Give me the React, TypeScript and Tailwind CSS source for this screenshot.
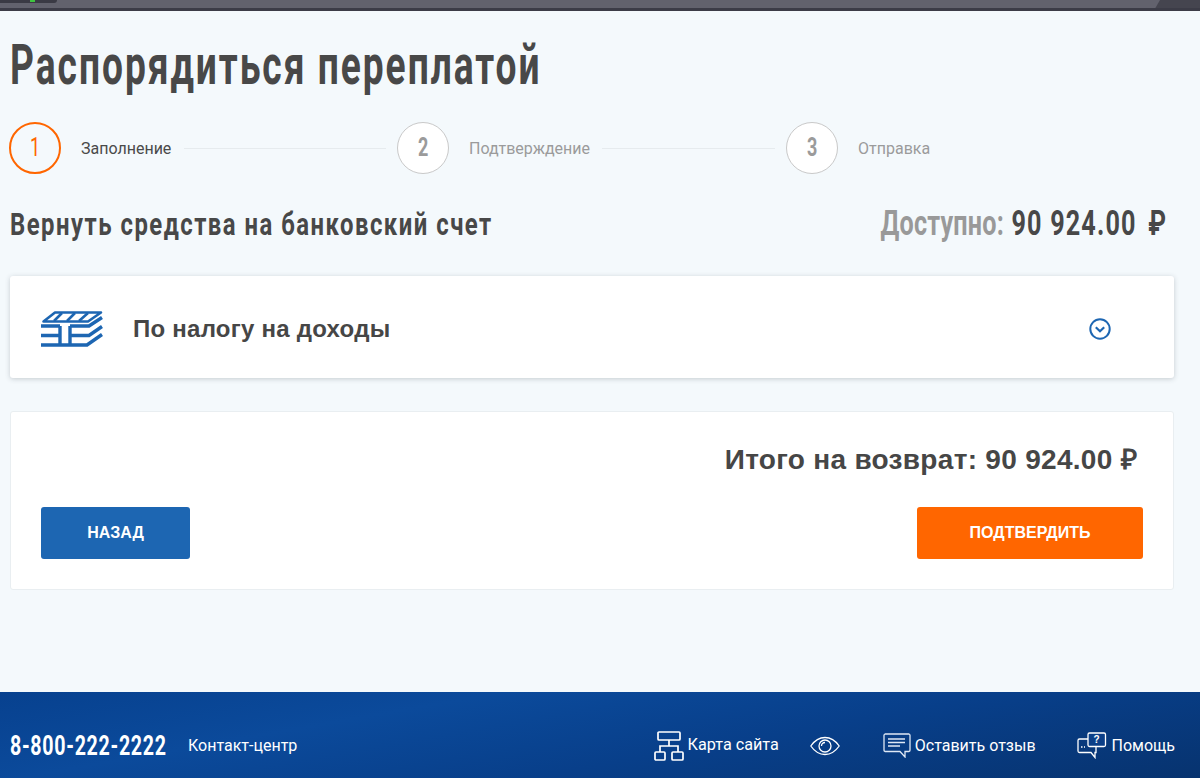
const din = "font-['Roboto',sans-serif] whitespace-nowrap inline-block";
const arial = "font-['Liberation_Sans',Arial,sans-serif]";

function Step({ n, label, active, labelWidth, lineWidth }: { n: number; label: string; active?: boolean; labelWidth: string; lineWidth?: string }) {
  return (
    <>
      <div className={`w-[52px] h-[52px] shrink-0 rounded-full flex items-center justify-center ${active ? "border-2 border-[#ff6600]" : "bg-white border border-[#c9c9c9]"}`}>
        <span className={`${din} text-[25px] scale-x-[0.72] ${active ? "text-[#ff6600] font-normal" : "text-[#9b9b9b] font-bold"}`}>{n}</span>
      </div>
      <span className={`ml-5 pt-[2px] text-[16px] font-['Roboto',sans-serif] whitespace-nowrap ${labelWidth} ${active ? "text-[#4a4a4a]" : "text-[#9b9b9b]"}`}>{label}</span>
      {lineWidth && <div className={`ml-3 mr-[11px] h-px bg-[#e6ebee] ${lineWidth}`} />}
    </>
  );
}

function TopBar() {
  return (
    <div className="h-[11px] shrink-0 bg-[#62626d] border-b-[3px] border-[#3c3c47] flex justify-between">
      <div className="w-[57px] h-[3px] bg-[#3a3a44] rounded-br flex justify-center">
        <div className="w-[5px] h-[2px] bg-[#3fc43f] ml-2" />
      </div>
      <div className="w-[48px] h-[8px] bg-[#45454f] -skew-x-[30deg] origin-top-right translate-x-2" />
    </div>
  );
}

function TaxIcon() {
  return (
    <svg width="62" height="36" viewBox="0 0 62 36" fill="none" stroke="#1d66b2">
      <path d="M14 1.5H60L47 10.5H2.5Z" strokeWidth="2.6" strokeLinejoin="round" />
      <path d="M21 2L13 10M34 2L26 10M47 2L38 10" strokeWidth="2.6" />
      <path d="M0 15H19M0 24.5H19M29 15H48L61 6.5M29 24.5H48L61 15.5M0 34H46L61 23.5M19 15V34M29 15V34" strokeWidth="3.4" />
    </svg>
  );
}

function ChevronCircle() {
  return (
    <svg width="22" height="22" viewBox="0 0 22 22" fill="none" stroke="#1d66b2">
      <circle cx="11" cy="11" r="9.7" strokeWidth="2" />
      <path d="M6.8 9.2L11 13.2L15.2 9.2" strokeWidth="2.2" />
    </svg>
  );
}

function SiteMapIcon() {
  return (
    <svg width="30" height="30" viewBox="0 0 30 30" fill="none" stroke="#fff" strokeWidth="1.7">
      <rect x="4" y="1" width="22" height="8" rx="1" />
      <path d="M15 9V15M6 21V15H24V21" />
      <rect x="1" y="21" width="10" height="8" rx="1" />
      <rect x="18" y="21" width="11" height="8" rx="1" />
    </svg>
  );
}

function EyeIcon() {
  return (
    <svg width="30" height="20" viewBox="0 0 30 20" fill="none" stroke="#fff" strokeWidth="1.3">
      <path d="M0.8 10C5 4 10 1.5 15 1.5S25 4 29.2 10C25 16 20 18.5 15 18.5S5 16 0.8 10Z" />
      <circle cx="15" cy="10" r="6" />
      <path d="M11.5 10A3.5 3.5 0 0 1 15 6.5" />
    </svg>
  );
}

function MessageIcon() {
  return (
    <svg width="28" height="25" viewBox="0 0 28 25" fill="none" stroke="#dfe8f5" strokeWidth="1.3">
      <path d="M2 1H26A1.5 1.5 0 0 1 27 2.5V17A1.5 1.5 0 0 1 26 18.5H22V24L17 18.5H2A1.5 1.5 0 0 1 1 17V2.5A1.5 1.5 0 0 1 2 1Z" />
      <path d="M5 6H22M5 9.5H22M5 13H17" strokeWidth="1.5" />
    </svg>
  );
}

function HelpIcon() {
  return (
    <svg width="30" height="27" viewBox="0 0 30 27" fill="none" stroke="#fff" strokeWidth="1.3">
      <path d="M11 7H2.5A1.5 1.5 0 0 0 1 8.5V19A1.5 1.5 0 0 0 2.5 20.5H14L18 25.5V20.5H19V15" />
      <path d="M11 2.5A1.5 1.5 0 0 1 12.5 1H27A1.5 1.5 0 0 1 28.5 2.5V13A1.5 1.5 0 0 1 27 14.5H12.5A1.5 1.5 0 0 1 11 13Z" fill="#0b3f88" />
      <path d="M4 15H8" strokeDasharray="1.5 1.5" />
      <text x="19.5" y="11" fontSize="10" fontWeight="700" fill="#fff" stroke="none" textAnchor="middle" fontFamily="Liberation Sans">?</text>
    </svg>
  );
}

export default function App() {
  return (
    <div className="h-[778px] overflow-hidden flex flex-col bg-[#f4f9fc] text-[#464646]">
      <TopBar />

      <main className="flex-1 pl-[10px] pr-[26px]">
        <h1 className="h-[111px] pt-[14px]">
          <span className={`${din} origin-left scale-x-[0.663] text-[56px] leading-[80px] font-bold tracking-[3px] text-[#484848]`}>Распорядиться переплатой</span>
        </h1>

        <div className="flex items-center h-[52px] -ml-px">
          <Step n={1} label="Заполнение" active labelWidth="w-[91px]" lineWidth="w-[202px]" />
          <Step n={2} label="Подтверждение" labelWidth="w-[121px]" lineWidth="w-[173px]" />
          <Step n={3} label="Отправка" labelWidth="w-[73px]" />
        </div>

        <div className="flex justify-between items-center h-[56px] mt-[22px] mb-[24px] pr-[7px]">
          <span className={`${din} origin-left scale-x-[0.746] text-[32px] font-bold tracking-[2px] text-[#484848]`}>Вернуть средства на банковский счет</span>
          <span className={`${din} origin-right scale-x-[0.72] text-[35px] font-bold tracking-[1.6px]`}>
            <span className="text-[#999999] tracking-[0.3px]">Доступно:</span> <span className="text-[#484848]">90 924.00<span className="ml-[16px]">₽</span></span>
          </span>
        </div>

        <section className="h-[102px] bg-white rounded-[3px] shadow-[0_1px_5px_rgba(60,70,80,0.25)] flex items-center pl-[31px] pr-[63px] pt-[4px]">
          <TaxIcon />
          <span className={`${arial} ml-[30px] text-[24px] font-bold tracking-[0.25px] flex-1`}>По налогу на доходы</span>
          <ChevronCircle />
        </section>

        <section className="mt-[33px] h-[179px] bg-white rounded-[3px] border border-[#e9eef1] px-[30px] pt-[30px]">
          <div className={`${arial} text-right text-[28px] leading-[36px] font-bold tracking-[0.3px] pr-[6px] text-[#464646]`}>Итого на возврат: 90 924.00 ₽</div>
          <div className="flex justify-between mt-[29px]">
            <button className={`${arial} w-[149px] h-[52px] rounded-[3px] bg-[#1d66b2] text-white font-bold text-[16px]`}>НАЗАД</button>
            <button className={`${arial} w-[226px] h-[52px] rounded-[3px] bg-[#ff6600] text-white font-bold text-[16px]`}>ПОДТВЕРДИТЬ</button>
          </div>
        </section>
      </main>

      <footer className="h-[86px] shrink-0 bg-[linear-gradient(170deg,#07418f_0%,#0b4a9b_30%,#083f8a_60%,#07336f_100%)] flex items-center pl-[10px] pr-[25px] pt-[21px] text-white">
        <span className={`${din} w-[178px] origin-left scale-x-[0.7] text-[28px] font-bold tracking-[1px]`}>8-800-222-2222</span>
        <span className="text-[16px] font-['Roboto',sans-serif] flex-1">Контакт-центр</span>
        <SiteMapIcon />
        <span className="ml-[4px] text-[16.2px] font-['Roboto',sans-serif]">Карта сайта</span>
        <span className="ml-[31px] flex"><EyeIcon /></span>
        <span className="ml-[43px] flex"><MessageIcon /></span>
        <span className="ml-[4px] text-[16px] font-['Roboto',sans-serif]">Оставить отзыв</span>
        <span className="ml-[41px] flex"><HelpIcon /></span>
        <span className="ml-[5px] text-[16px] font-['Roboto',sans-serif]">Помощь</span>
      </footer>
    </div>
  );
}
